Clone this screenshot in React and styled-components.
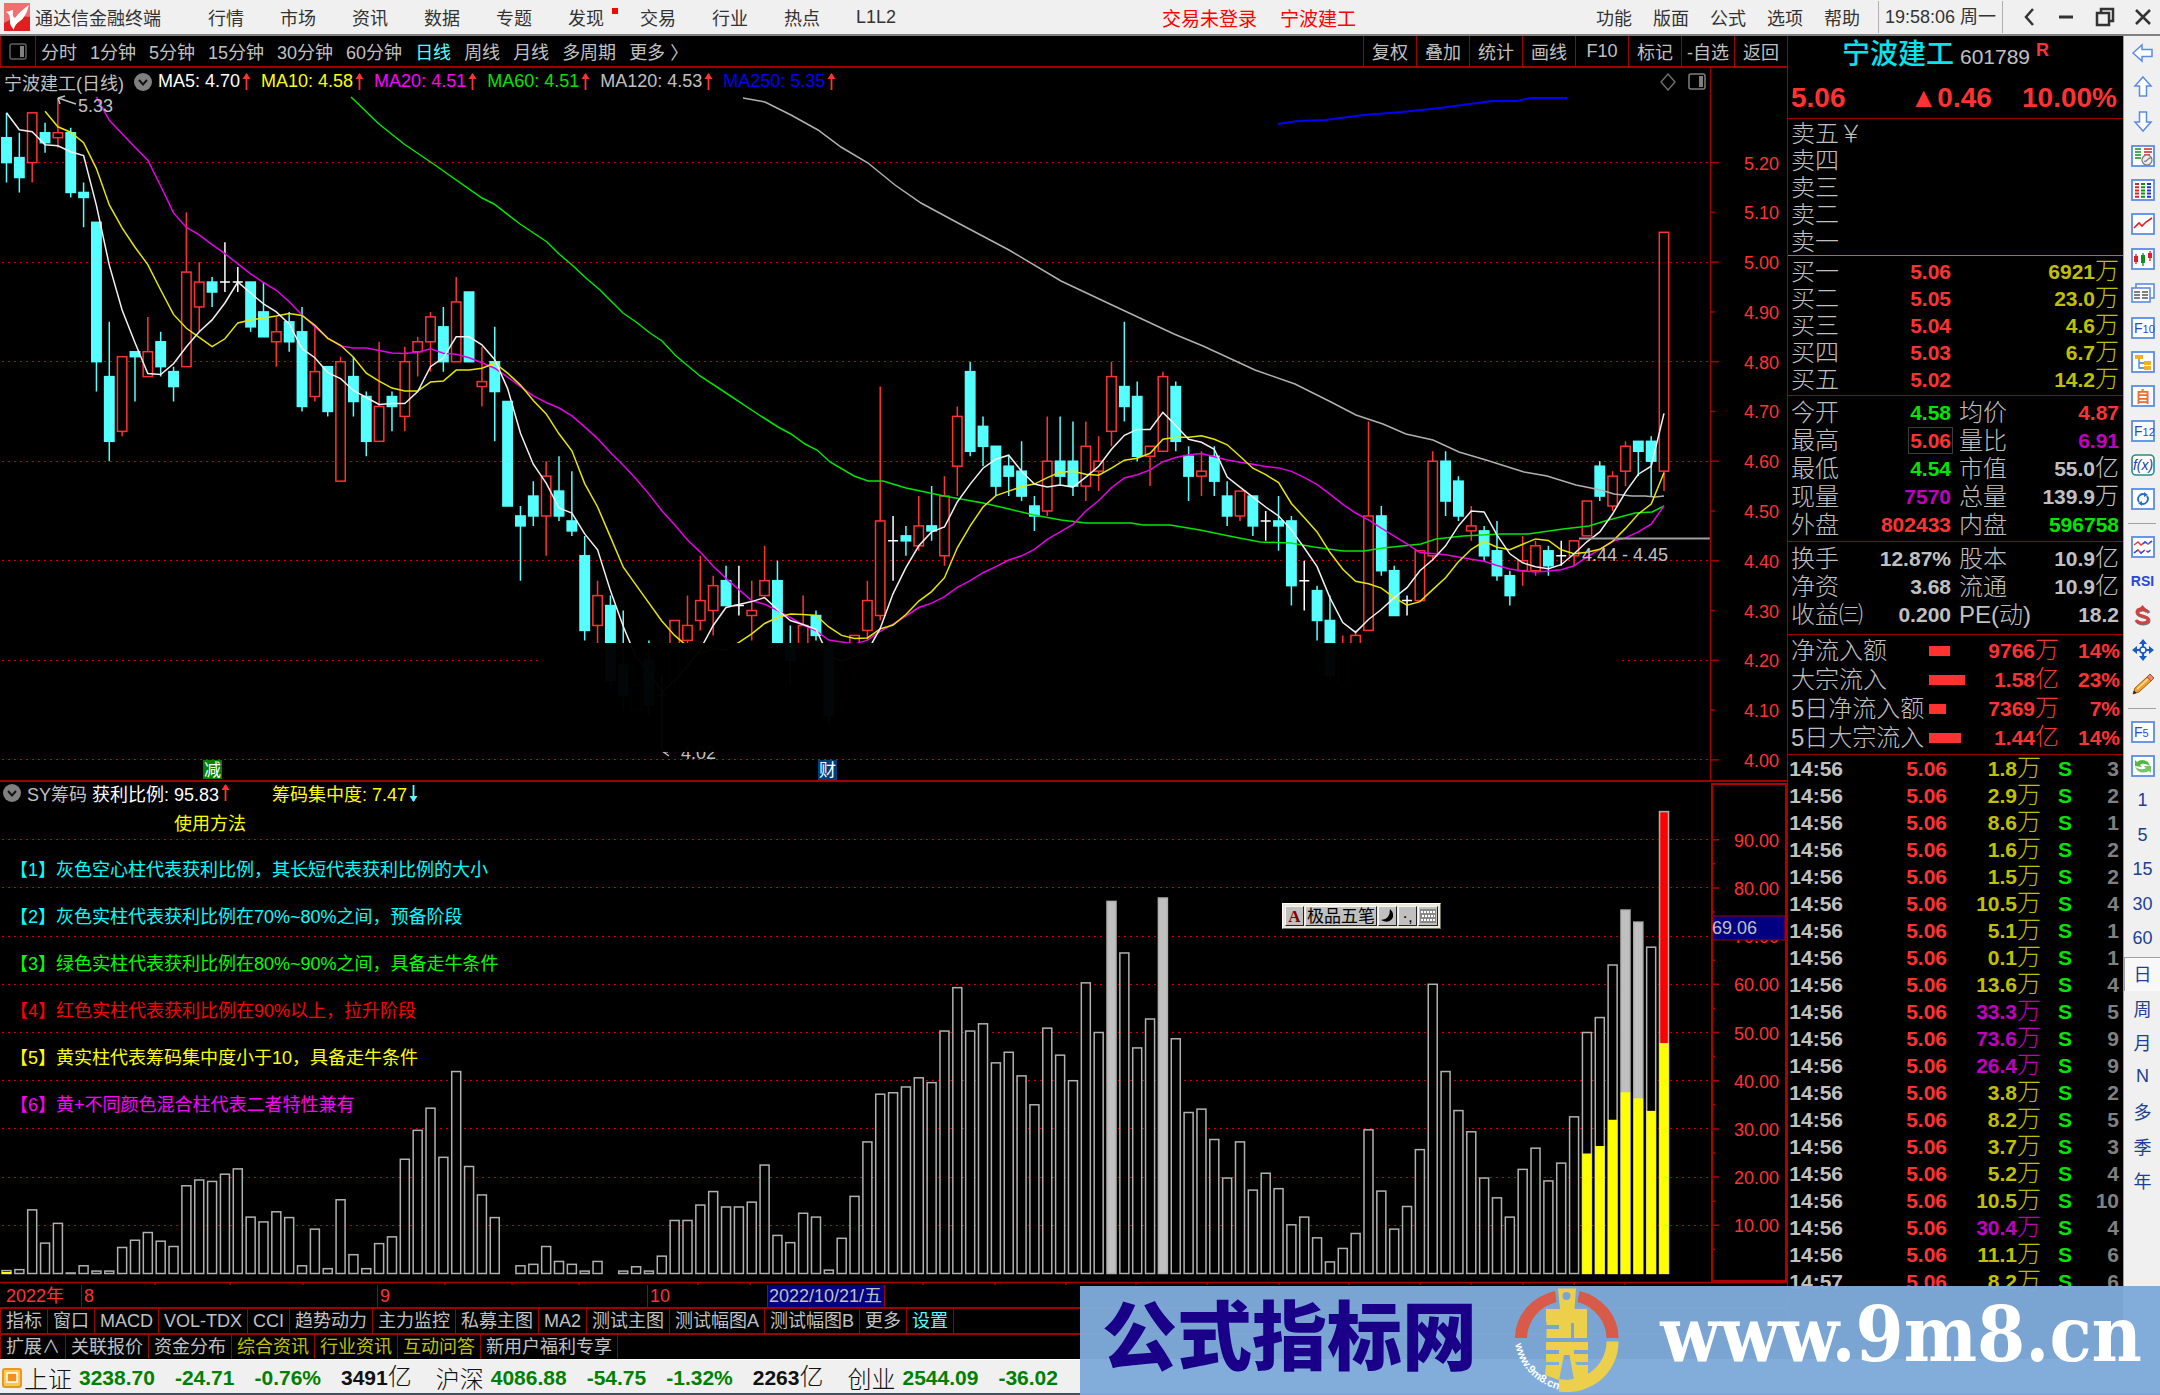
import React, { useState } from 'react';
import styled, { createGlobalStyle } from 'styled-components';

const SANS = "'Liberation Sans', 'Noto Sans CJK SC', sans-serif";

const GlobalStyle = createGlobalStyle`
    * {
        box-sizing: border-box;
    }
    body {
        margin: 0;
        background: #000;
        font-family: ${SANS};
        font-size: 18px;
        color: #c0c0c0;
    }
    button {
        margin: 0;
        padding: 0;
        border: 0;
        background: none;
        color: inherit;
        font: inherit;
        white-space: nowrap;
        cursor: pointer;
    }
    a {
        color: inherit;
        text-decoration: none;
    }
    table {
        width: 100%;
        border-collapse: collapse;
        table-layout: fixed;
    }
    th, td {
        padding: 0;
        white-space: nowrap;
    }
    svg {
        display: block;
    }
`;

/* ---------- data ---------- */

const menuLeft = ['行情', '市场', '资讯', '数据', '专题', '发现', '交易', '行业', '热点', 'L1L2'];
const menuRight = ['功能', '版面', '公式', '选项', '帮助'];
const periods = ['分时', '1分钟', '5分钟', '15分钟', '30分钟', '60分钟', '日线', '周线', '月线', '多周期'];
const tools = ['复权', '叠加', '统计', '画线', 'F10', '标记', '-自选', '返回'];

const averages = [
    ['MA5: 4.70', '#ffffff'],
    ['MA10: 4.58', '#ffff00'],
    ['MA20: 4.51', '#ff00ff'],
    ['MA60: 4.51', '#00e600'],
    ['MA120: 4.53', '#c0c0c0'],
    ['MA250: 5.35', '#0000ff'],
];

// open, high, low, close
const candles = [
    [5.25, 5.30, 5.16, 5.20], [5.21, 5.26, 5.14, 5.17], [5.20, 5.30, 5.16, 5.30], [5.26, 5.28, 5.22, 5.24],
    [5.25, 5.33, 5.23, 5.26], [5.26, 5.27, 5.13, 5.14], [5.14, 5.16, 5.07, 5.13], [5.08, 5.08, 4.74, 4.80],
    [4.77, 4.88, 4.60, 4.64], [4.66, 4.81, 4.65, 4.81], [4.82, 4.82, 4.72, 4.81], [4.77, 4.89, 4.77, 4.82],
    [4.84, 4.86, 4.77, 4.79], [4.78, 4.79, 4.72, 4.75], [4.79, 5.10, 4.79, 4.98], [4.91, 5.00, 4.86, 4.96],
    [4.96, 4.97, 4.91, 4.94], [4.96, 5.04, 4.94, 4.96], [4.96, 4.99, 4.94, 4.96], [4.96, 4.96, 4.86, 4.87],
    [4.90, 4.96, 4.85, 4.85], [4.84, 4.89, 4.79, 4.86], [4.88, 4.90, 4.82, 4.84], [4.86, 4.91, 4.70, 4.71],
    [4.73, 4.87, 4.72, 4.78], [4.79, 4.79, 4.69, 4.70], [4.56, 4.81, 4.56, 4.80], [4.77, 4.81, 4.69, 4.72],
    [4.73, 4.74, 4.61, 4.64], [4.64, 4.84, 4.64, 4.71], [4.73, 4.74, 4.66, 4.71], [4.69, 4.83, 4.66, 4.80],
    [4.82, 4.85, 4.77, 4.84], [4.84, 4.90, 4.78, 4.89], [4.87, 4.91, 4.78, 4.80], [4.80, 4.97, 4.80, 4.92],
    [4.94, 4.94, 4.80, 4.80], [4.75, 4.83, 4.71, 4.76], [4.80, 4.87, 4.64, 4.74], [4.72, 4.72, 4.51, 4.51],
    [4.49, 4.51, 4.36, 4.47], [4.53, 4.56, 4.47, 4.49], [4.49, 4.60, 4.41, 4.57], [4.54, 4.61, 4.48, 4.49],
    [4.48, 4.58, 4.45, 4.46], [4.41, 4.45, 4.24, 4.26], [4.27, 4.36, 4.23, 4.33], [4.31, 4.33, 4.15, 4.16],
    [4.19, 4.30, 4.10, 4.13], [4.10, 4.18, 4.10, 4.15], [4.20, 4.24, 4.09, 4.11], [4.13, 4.17, 4.02, 4.13],
    [4.16, 4.28, 4.14, 4.28], [4.24, 4.33, 4.18, 4.27], [4.28, 4.41, 4.26, 4.32], [4.30, 4.37, 4.25, 4.35],
    [4.36, 4.39, 4.31, 4.31], [4.31, 4.39, 4.29, 4.31], [4.29, 4.36, 4.24, 4.30], [4.33, 4.43, 4.33, 4.36],
    [4.36, 4.40, 4.22, 4.23], [4.23, 4.27, 4.15, 4.20], [4.22, 4.33, 4.20, 4.27], [4.29, 4.30, 4.24, 4.25],
    [4.23, 4.23, 4.07, 4.09], [4.12, 4.20, 4.10, 4.18], [4.18, 4.25, 4.16, 4.25], [4.26, 4.36, 4.24, 4.32],
    [4.29, 4.75, 4.28, 4.48], [4.44, 4.49, 4.36, 4.44], [4.45, 4.47, 4.41, 4.44], [4.43, 4.53, 4.42, 4.47],
    [4.47, 4.55, 4.44, 4.46], [4.41, 4.57, 4.39, 4.53], [4.59, 4.71, 4.53, 4.69], [4.78, 4.80, 4.61, 4.62],
    [4.67, 4.69, 4.59, 4.63], [4.63, 4.63, 4.53, 4.55], [4.59, 4.61, 4.53, 4.57], [4.58, 4.64, 4.52, 4.53],
    [4.51, 4.53, 4.46, 4.49], [4.50, 4.69, 4.49, 4.60], [4.60, 4.69, 4.55, 4.57], [4.60, 4.68, 4.53, 4.55],
    [4.55, 4.68, 4.52, 4.63], [4.58, 4.65, 4.54, 4.60], [4.66, 4.80, 4.63, 4.77], [4.75, 4.88, 4.68, 4.71],
    [4.73, 4.76, 4.60, 4.61], [4.61, 4.63, 4.55, 4.63], [4.62, 4.78, 4.62, 4.77], [4.75, 4.76, 4.62, 4.64],
    [4.61, 4.63, 4.52, 4.57], [4.57, 4.62, 4.53, 4.58], [4.61, 4.63, 4.53, 4.56], [4.53, 4.56, 4.47, 4.49],
    [4.49, 4.54, 4.48, 4.54], [4.53, 4.53, 4.45, 4.47], [4.48, 4.50, 4.44, 4.48], [4.48, 4.53, 4.42, 4.47],
    [4.48, 4.49, 4.31, 4.35], [4.36, 4.40, 4.30, 4.36], [4.34, 4.35, 4.24, 4.28], [4.28, 4.33, 4.16, 4.17],
    [4.15, 4.25, 4.14, 4.22], [4.21, 4.26, 4.20, 4.25], [4.26, 4.68, 4.26, 4.49], [4.49, 4.51, 4.37, 4.38],
    [4.38, 4.39, 4.29, 4.29], [4.32, 4.33, 4.29, 4.32], [4.32, 4.42, 4.32, 4.42], [4.41, 4.62, 4.40, 4.60],
    [4.60, 4.62, 4.49, 4.52], [4.56, 4.57, 4.48, 4.49], [4.46, 4.51, 4.44, 4.47], [4.46, 4.47, 4.40, 4.41],
    [4.42, 4.48, 4.36, 4.37], [4.37, 4.38, 4.31, 4.33], [4.38, 4.45, 4.35, 4.40], [4.38, 4.44, 4.37, 4.43],
    [4.42, 4.43, 4.37, 4.39], [4.41, 4.44, 4.39, 4.41], [4.41, 4.44, 4.39, 4.44], [4.45, 4.52, 4.45, 4.52],
    [4.59, 4.60, 4.52, 4.53], [4.51, 4.58, 4.50, 4.57], [4.58, 4.64, 4.55, 4.63], [4.64, 4.64, 4.57, 4.62],
    [4.64, 4.65, 4.53, 4.60], [4.58, 5.06, 4.54, 5.06],
];

// closes of the days before the first visible candle
const earlier = [5.58, 5.35, 5.35, 5.34, 5.83, 5.83, 5.57, 5.25, 5.34, 5.32, 5.37, 5.27];

const ma60 = '351,97 379,124 404,144 432,163 482,198 494,204 520,224 547,242 559,254 572,265 586,278 600,290 623,313 636,322 650,333 662,341 675,355 700,376 726,393 753,411 778,427 791,434 805,444 817,450 830,462 854,476 868,481 883,481 906,488 944,496 983,503 1009,509 1034,515 1061,520 1086,523 1131,523 1143,525 1170,525 1200,530 1234,537 1260,542 1291,543 1314,547 1343,551 1364,551 1383,548 1421,544 1436,539 1463,536 1501,534 1528,534 1563,529 1589,526 1605,521 1635,513 1652,512 1664,506';
const ma120 = '743,98 765,102 791,115 818,130 841,147 868,163 895,185 921,203 958,223 1009,250 1061,281 1112,305 1174,334 1203,346 1255,370 1295,384 1329,401 1356,415 1383,424 1406,434 1433,440 1459,452 1486,460 1524,472 1547,476 1576,485 1601,490 1614,494 1632,496 1645,496 1655,497 1664,496';
const ma250 = '1278,124 1298,121 1325,120 1364,115 1402,112 1440,108 1492,101 1517,101 1531,98 1567,98';

const profit = [
    0.6, 0.8, 13.2, 6.3, 10.4, 0.1, 1.6, 0.5, 0.5, 5.4, 6.9, 8.5, 6.7, 5.6, 18.2, 19.4, 19.1, 20.6, 21.7, 11.7,
    10.7, 12.8, 11.6, 1.6, 9.2, 1, 15.3, 3.9, 1, 6.2, 7.6, 23.7, 29.7, 34.3, 24.1, 41.9, 22.2, 16.3, 11.6, 0,
    1.6, 1.9, 5.6, 2.5, 1.9, 0.5, 2.5, 0, 0.5, 1.4, 0.5, 3.6, 11, 11, 14.2, 17, 13.8, 13.8, 14.8, 22.5,
    7.9, 6.4, 12.5, 11.7, 0.7, 7.3, 16, 27.3, 37.2, 37.5, 38.7, 40.6, 39.6, 50.3, 59.3, 50.3, 51.8, 43.7, 45.9, 41,
    35, 50.9, 45.3, 40, 60.3, 50, 77.2, 66.5, 46.8, 52.8, 77.9, 48.7, 33.4, 34.1, 27.8, 19.8, 27.3, 17.3, 20.8, 17.6,
    10.1, 11.7, 7.4, 2.4, 5.2, 8.3, 29.8, 17.1, 9.2, 13.9, 25.7, 60, 41.9, 33.8, 29.4, 19.8, 15.7, 11.7, 21.6, 26,
    19.2, 22.9, 32.5, 50, 53.1, 64, 75.4, 72.9, 67.7, 95.83,
];

const legend = [
    ['【1】灰色空心柱代表获利比例，其长短代表获利比例的大小', '#00ffff'],
    ['【2】灰色实柱代表获利比例在70%~80%之间，预备阶段', '#00ffff'],
    ['【3】绿色实柱代表获利比例在80%~90%之间，具备走牛条件', '#00ff00'],
    ['【4】红色实柱代表获利比例在90%以上，拉升阶段', '#ff0000'],
    ['【5】黄实柱代表筹码集中度小于10，具备走牛条件', '#ffff00'],
    ['【6】黄+不同颜色混合柱代表二者特性兼有', '#ff00ff'],
];

const indicatorTabs = ['指标', '窗口', 'MACD', 'VOL-TDX', 'CCI', '趋势动力', '主力监控', '私募主图', 'MA2', '测试主图', '测试幅图A', '测试幅图B', '更多', '设置'];
const infoTabs = ['扩展∧', '关联报价', '资金分布', '综合资讯', '行业资讯', '互动问答', '新用户福利专享'];

const RED = '#ff3232';
const GREEN = '#00e600';
const GOLD = '#c0c000';
const PURPLE = '#c000c0';
const GRAY = '#c0c0c0';

const asks = ['卖五￥', '卖四', '卖三', '卖二', '卖一'];
const bids = [
    ['买一', '5.06', '6921万'],
    ['买二', '5.05', '23.0万'],
    ['买三', '5.04', '4.6万'],
    ['买四', '5.03', '6.7万'],
    ['买五', '5.02', '14.2万'],
];
const stats = [
    ['今开', '4.58', GREEN, '均价', '4.87', RED],
    ['最高', '5.06', RED, '量比', '6.91', PURPLE],
    ['最低', '4.54', GREEN, '市值', '55.0亿', GRAY],
    ['现量', '7570', PURPLE, '总量', '139.9万', GRAY],
    ['外盘', '802433', RED, '内盘', '596758', GREEN],
];
const shares = [
    ['换手', '12.87%', GRAY, '股本', '10.9亿', GRAY],
    ['净资', '3.68', GRAY, '流通', '10.9亿', GRAY],
    ['收益㈢', '0.200', GRAY, 'PE(动)', '18.2', GRAY],
];
const flows = [
    ['净流入额', 21, '9766万', '14%'],
    ['大宗流入', 36, '1.58亿', '23%'],
    ['5日净流入额', 17, '7369万', '7%'],
    ['5日大宗流入', 32, '1.44亿', '14%'],
];
const ticks = [
    ['14:56', '1.8', 3], ['14:56', '2.9', 2], ['14:56', '8.6', 1], ['14:56', '1.6', 2], ['14:56', '1.5', 2],
    ['14:56', '10.5', 4], ['14:56', '5.1', 1], ['14:56', '0.1', 1], ['14:56', '13.6', 4], ['14:56', '33.3', 5],
    ['14:56', '73.6', 9], ['14:56', '26.4', 9], ['14:56', '3.8', 2], ['14:56', '8.2', 5], ['14:56', '3.7', 3],
    ['14:56', '5.2', 4], ['14:56', '10.5', 10], ['14:56', '30.4', 4], ['14:56', '11.1', 6], ['14:57', '8.2', 6],
];

const indices = [
    ['上证', '3238.70', '-24.71', '-0.76%', '3491'],
    ['沪深', '4086.88', '-54.75', '-1.32%', '2263'],
    ['创业', '2544.09', '-36.02'],
];

/* ---------- top bars ---------- */

const Page = styled.div`
    position: relative;
    display: flex;
    flex-direction: column;
    min-height: 100vh;
    overflow: hidden;
    background: #000;
`;

const TopBar = styled.header`
    display: flex;
    align-items: center;
    height: 36px;
    background: #f0f0f0;
    border-bottom: 2px solid #808080;
    color: #333;
`;

const Brand = styled.div`
    display: flex;
    align-items: center;
    gap: 5px;
    width: 208px;
    padding-left: 4px;
`;

const Menu = styled.nav`
    display: flex;
    gap: ${p => p.$gap}px;
`;

const MenuButton = styled.button`
    position: relative;
    width: 36px;
    text-align: left;
    color: #333;
`;

const Dot = styled.i`
    position: absolute;
    top: 4px;
    right: -14px;
    width: 6px;
    height: 6px;
    background: #f00;
`;

const Notice = styled.div`
    display: flex;
    gap: 23px;
    margin: 0 auto;
    padding-left: 30px;
    color: #f00;
    font-size: 19px;
`;

const Clock = styled.time`
    height: 32px;
    margin-left: 18px;
    padding: 0 6px;
    border: solid #b0b0b0;
    border-width: 0 1px;
    line-height: 32px;
`;

const WindowButtons = styled.div`
    display: flex;
    justify-content: space-between;
    width: 132px;
    margin: 0 8px 0 17px;
`;

const Body = styled.div`
    display: grid;
    grid-template-columns: minmax(0, 1fr) 336px 37px;
    flex: 1;
`;

const Main = styled.main`
    display: flex;
    flex-direction: column;
    min-width: 0;
`;

const PeriodBar = styled.div`
    display: flex;
    height: 32px;
    border-bottom: 2px solid #a00000;
    border-left: 1px solid #a00000;
`;

const LayoutButton = styled.button`
    display: grid;
    place-items: center;
    width: 35px;
    margin-right: 5px;
    border-right: 1px solid #a00000;
`;

const Periods = styled.nav`
    display: flex;
    flex: 1;
    gap: 13px;
`;

const PeriodButton = styled.button`
    color: ${p => (p.$active ? '#55ffff' : '#c0c0c0')};
`;

const ToolButton = styled.button`
    width: 53px;
    border-left: 1px solid #a00000;
`;

/* ---------- charts ---------- */

const InfoRow = styled.div`
    display: flex;
    align-items: center;
    height: 27px;
    padding-left: 4px;
`;

const InfoTitle = styled.span`
    width: 130px;
`;

const Averages = styled.div`
    display: flex;
    gap: 10px;
    margin-left: 6px;
`;

const Average = styled.span`
    display: flex;
    align-items: center;
    gap: 2px;
    color: ${p => p.$color};
`;

const InfoIcons = styled.div`
    display: flex;
    align-items: center;
    align-self: stretch;
    gap: 12px;
    margin-left: auto;
    padding-right: 4px;
`;

const AxisTop = styled.div`
    align-self: stretch;
    width: 77px;
    border-left: 1px solid #a00000;
`;

const ChartSvg = styled.svg`
    width: 100%;
    height: auto;
    font-family: ${SANS};
    font-size: 18px;
`;

const PriceChart = styled.section`
    border-bottom: 2px solid #a00000;
`;

const IndicatorPanel = styled.section`
    position: relative;
`;

const IndicatorText = styled.div`
    position: absolute;
    top: 0;
    left: 0;
`;

const IndicatorTitle = styled.div`
    display: flex;
    align-items: center;
    height: 22px;
    padding-left: 3px;
`;

const IndicatorName = styled.span`
    width: 65px;
    margin-left: 6px;
`;

const IndicatorValue = styled.span`
    display: flex;
    align-items: center;
    gap: 2px;
    width: 180px;
    color: ${p => p.$color};
`;

const LegendTitle = styled.h2`
    height: 43px;
    margin: 0;
    padding-left: 174px;
    color: #ff0;
    font-size: 18px;
    font-weight: 400;
    line-height: 40px;
`;

const LegendList = styled.ul`
    margin: 0;
    padding: 0 0 0 10px;
    list-style: none;
`;

const LegendItem = styled.li`
    height: 47px;
    color: ${p => p.$color};
    line-height: 47px;
`;

const ImeBar = styled.div`
    position: absolute;
    top: 121px;
    left: 1282px;
    display: flex;
    gap: 1px;
    padding: 2px;
    border: 1px solid;
    border-color: #fff #707060 #707060 #fff;
    background: #ece9d8;
`;

const ImeButton = styled.button`
    display: grid;
    place-items: center;
    min-width: 19px;
    height: 20px;
    padding: 0 1px;
    border: 1px solid;
    border-color: #f4f4f4 #222 #222 #f4f4f4;
    background: #c0c0c0;
    color: #000;
    font-size: 17px;
    line-height: 17px;
`;

const ImeLetter = styled.b`
    color: #800000;
    font-family: 'Liberation Serif', serif;
`;

const DateStrip = styled.div`
    display: flex;
    height: 22px;
    color: ${RED};
    line-height: 22px;
`;

const DateCell = styled.div`
    width: ${p => p.$width}px;
    padding-left: ${p => p.$pad}px;
    border-right: 1px solid #a00000;
`;

const CursorDate = styled(DateCell)`
    background: #000080;
    color: #c0c0c0;
`;

const TabRow = styled.nav`
    display: flex;
    height: 26px;
    border-top: 2px solid #a00000;
    border-left: 1px solid #a00000;
`;

const TabButton = styled.button`
    padding: 0 5px;
    border-right: 1px solid #a00000;
    color: ${p => p.$color || '#c0c0c0'};
    line-height: 24px;
`;

const UpArrow = () => (
    <svg width="9" height="18" viewBox="0 0 9 18">
        <path d="M4.500 1V17" stroke={RED} strokeWidth="1.800" />
        <path d="M4.500 0L8.500 6H0.500Z" fill={RED} />
    </svg>
);

const DownArrow = () => (
    <svg width="9" height="18" viewBox="0 0 9 18">
        <path d="M4.500 1V17" stroke="#55ffff" strokeWidth="1.800" />
        <path d="M4.500 18L8.500 12H0.500Z" fill="#55ffff" />
    </svg>
);

const Chevron = () => (
    <svg width="18" height="18" viewBox="0 0 18 18">
        <circle cx="9" cy="9" r="9" fill="#808080" />
        <path d="M5 7L9 11.500L13 7" fill="none" stroke="#111" strokeWidth="2" />
    </svg>
);

const SideIcon = ({ filled }) => (
    <svg width="18" height="17" viewBox="0 0 18 17">
        <rect x="1" y="1" width="16" height="15" rx="2" fill="none" stroke={filled ? '#808080' : '#606060'} strokeWidth="1.500" />
        <rect x="11" y="3" width="4" height="11" fill="#808080" />
    </svg>
);

const STEP = 12.849;
const xAt = i => 6.5 + i * STEP;
const priceY = p => 162.6 + (5.2 - p) * 497.7;
const percentY = v => 1273.5 - v * 4.82;

function averageLine(days) {
    const closes = earlier.concat(candles.map(c => c[3]));
    const points = [];
    candles.forEach((c, i) => {
        const end = i + earlier.length + 1;
        if (end < days) return;
        const mean = closes.slice(end - days, end).reduce((a, b) => a + b, 0) / days;
        if (mean < 5.34) points.push(`${xAt(i).toFixed(1)},${priceY(mean).toFixed(1)}`);
    });
    return points.join(' ');
}

function Candle({ index, data }) {
    const [open, high, low, close] = data;
    const x = xAt(index);
    const top = priceY(Math.max(open, close));
    const bottom = priceY(Math.min(open, close));
    if (open === close) {
        return <path d={`M${x} ${priceY(high)}V${priceY(low)}M${x - 5} ${top}H${x + 5}`} stroke="#fff" strokeWidth="1.500" />;
    }
    const up = close > open;
    const color = up ? RED : '#55ffff';
    return (
        <g stroke={color} strokeWidth="1.500">
            <path d={`M${x} ${priceY(high)}V${top}M${x} ${bottom}V${priceY(low)}`} />
            <rect x={x - 4.7} y={top} width="9.400" height={bottom - top} fill={up ? '#000' : color} />
        </g>
    );
}

const GridLine = ({ y }) => (
    <path d={`M2 ${Math.floor(y) + 0.5}H1710`} stroke="#d00000" strokeWidth="1" strokeDasharray="2 4" />
);

function Candles() {
    const major = [5.2, 5.0, 4.8, 4.6, 4.4, 4.2, 4.0];
    const minor = [5.1, 4.9, 4.7, 4.5, 4.3, 4.1];
    return (
        <ChartSvg viewBox="0 95 1787 685" role="img" aria-label="日线">
            {major.map(p => <GridLine key={p} y={priceY(p)} />)}
            {candles.map((c, i) => <Candle key={i} index={i} data={c} />)}
            <g fill="none" strokeWidth="1.500">
                <polyline points={ma250} stroke="#0000ff" strokeWidth="2" />
                <polyline points={ma120} stroke="#b0b0b0" />
                <polyline points={ma60} stroke="#00e600" />
                <polyline points={averageLine(20)} stroke="#e600e6" />
                <polyline points={averageLine(10)} stroke="#e6e600" />
                <polyline points={averageLine(5)} stroke="#f0f0f0" />
            </g>
            <path d="M76 104L58 98M58 98L60 104M58 98L65 96" fill="none" stroke="#c0c0c0" strokeWidth="1.500" />
            <text x="78" y="112" fill="#c0c0c0">5.33</text>
            <path d="M662 751L669 756M662 751L668 752" fill="none" stroke="#c0c0c0" strokeWidth="1.500" />
            <text x="681" y="759" fill="#c0c0c0">4.02</text>
            <rect x="538" y="643" width="1082" height="109" fill="#000" fillOpacity="0.975" />
            <path d="M1579 538.500H1710" stroke="#a0a0a0" strokeWidth="2" />
            <text x="1582" y="561" fill="#c0c0c0">4.44 - 4.45</text>
            <rect x="203" y="760" width="19" height="19" fill="#008000" />
            <text x="204" y="776" fill="#fff" fontSize="17">减</text>
            <rect x="818" y="760" width="19" height="20" fill="#003c78" />
            <text x="819" y="776" fill="#fff" fontSize="17">财</text>
            <path d="M1710.500 95V780" stroke="#a00000" strokeWidth="1.500" />
            {major.map(p => <path key={p} d={`M1711 ${priceY(p)}h8`} stroke="#a00000" strokeWidth="1.500" />)}
            {minor.map(p => <path key={p} d={`M1711 ${priceY(p)}h4`} stroke="#a00000" strokeWidth="1.500" />)}
            {major.concat(minor).map(p => (
                <text key={p} x="1779" y={priceY(p) + 7} fill={RED} textAnchor="end">{p.toFixed(2)}</text>
            ))}
        </ChartSvg>
    );
}

function ProfitBar({ index, value }) {
    if (value === 0) return null;
    const x = xAt(index);
    const y = percentY(value);
    const height = 1273.5 - y;
    const solid = value >= 90 ? '#ff0000' : value >= 70 ? '#c0c0c0' : '#000';
    const concentrated = index === 0 || index > 122;
    const half = Math.max(height / 2, 2);
    return (
        <g>
            <rect x={x - 4.5} y={y} width="9" height={height} fill={solid} stroke="#b0b0b0" strokeWidth="1.500" />
            {concentrated && <rect x={x - 4.7} y={1274 - half} width="9.400" height={half} fill="#ffff00" />}
        </g>
    );
}

function Bars() {
    const levels = [10, 20, 30, 40, 50, 60, 70, 80, 90];
    const dayMarks = [155, 230, 303, 445, 512, 579, 698, 750, 923, 995, 1066, 1136, 1207, 1279, 1349, 1420, 1471, 1523, 1574, 1625];
    return (
        <ChartSvg viewBox="0 782 1787 503" role="img" aria-label="SY筹码">
            {levels.map(v => <GridLine key={v} y={percentY(v)} />)}
            {profit.map((v, i) => <ProfitBar key={i} index={i} value={v} />)}
            <rect x="1712" y="784" width="74" height="497" fill="none" stroke="#b00000" strokeWidth="2" />
            {levels.map(v => (
                <g key={v}>
                    <path d={`M1712 ${percentY(v)}h7M1712 ${percentY(v - 5)}h3`} stroke="#b00000" strokeWidth="1.500" />
                    <text x="1779" y={percentY(v) + 7} fill={RED} textAnchor="end">{v.toFixed(2)}</text>
                </g>
            ))}
            <rect x="1713" y="916" width="72" height="24" fill="#000080" stroke="#a00000" />
            <text x="1712" y="934" fill="#c0c0c0">69.06</text>
            <path d="M0 1282.500H1787" stroke="#b00000" strokeWidth="1.500" />
            {dayMarks.map(x => <path key={x} d={`M${x} 1282v3`} stroke="#b00000" strokeWidth="1.500" />)}
        </ChartSvg>
    );
}

/* ---------- quote panel ---------- */

const QuotePanel = styled.aside`
    height: 100%;
    border-left: 1px solid #a00000;
    overflow: hidden;
    font-size: 21px;
`;

const Block = styled.section`
    padding: ${p => p.$pad || '0'};
    border-bottom: ${p => (p.$last ? '0' : '1px')} solid ${p => p.$line || '#a00000'};
`;

const StockTitle = styled.h1`
    display: flex;
    justify-content: center;
    align-items: flex-end;
    gap: 6px;
    height: 38px;
    margin: 0;
    padding-right: 20px;
    color: #00e5ee;
    font-size: 28px;
    font-weight: 500;
    line-height: 38px;
`;

const StockCode = styled.span`
    color: #c0c0c0;
    font-size: 21px;
    line-height: 34px;
`;

const MarginFlag = styled.sup`
    align-self: flex-start;
    color: ${RED};
    font-size: 18px;
    font-weight: 700;
    line-height: 28px;
`;

const Headline = styled.div`
    display: flex;
    justify-content: space-between;
    height: 44px;
    padding: 0 6px 0 3px;
    color: ${RED};
    font-size: 28px;
    font-weight: 700;
    line-height: 48px;
`;

const Rise = styled.span`
    padding-left: 34px;
`;

const Row = styled.tr`
    height: ${p => p.$height || 27}px;
`;

const Label = styled.th`
    width: ${p => (p.$width ? `${p.$width}px` : 'auto')};
    padding-left: 3px;
    font-size: 24px;
    font-weight: 300;
    line-height: 27px;
    text-align: left;
`;

const Value = styled.td`
    width: ${p => (p.$width ? `${p.$width}px` : 'auto')};
    padding-right: ${p => p.$gap || 0}px;
    color: ${p => p.$color};
    font-weight: 700;
    line-height: 27px;
    text-align: right;
`;

const Unit = styled.span`
    font-size: 24px;
    font-weight: 300;
    line-height: 1;
`;

const Boxed = styled.span`
    outline: 1px solid #3c3c3c;
    outline-offset: 1px;
`;

const FlowBar = styled.i`
    display: block;
    height: 10px;
    background: ${RED};
`;

const Amount = ({ text }) => {
    const unit = text.slice(-1);
    return unit === '万' || unit === '亿' ? <>{text.slice(0, -1)}<Unit>{unit}</Unit></> : text;
};

const StatTable = ({ rows }) => (
    <table>
        <tbody>
            {rows.map(([a, av, ac, b, bv, bc]) => (
                <Row key={a} $height={28}>
                    <Label $width={76}>{a}</Label>
                    <Value $width={92} $gap={5} $color={ac}>
                        {a === '最高' ? <Boxed>{av}</Boxed> : av}
                    </Value>
                    <Label $width={72}>{b}</Label>
                    <Value $gap={4} $color={bc}><Amount text={bv} /></Value>
                </Row>
            ))}
        </tbody>
    </table>
);

function Quote() {
    return (
        <QuotePanel>
            <Block>
                <StockTitle>
                    宁波建工<StockCode>601789</StockCode><MarginFlag>R</MarginFlag>
                </StockTitle>
                <Headline><span>5.06</span><Rise>▲0.46</Rise><span>10.00%</span></Headline>
            </Block>
            <Block $pad="1px 0 0" $line="#a08000">
                <table>
                    <tbody>
                        {asks.map(a => <Row key={a}><Label>{a}</Label></Row>)}
                    </tbody>
                </table>
            </Block>
            <Block $pad="2px 0">
                <table>
                    <tbody>
                        {bids.map(([name, price, volume]) => (
                            <Row key={name}>
                                <Label $width={76}>{name}</Label>
                                <Value $width={92} $gap={5} $color={RED}>{price}</Value>
                                <Value $gap={4} $color={GOLD}><Amount text={volume} /></Value>
                            </Row>
                        ))}
                    </tbody>
                </table>
            </Block>
            <Block $pad="2px 0 3px"><StatTable rows={stats} /></Block>
            <Block $pad="2px 0 6px"><StatTable rows={shares} /></Block>
            <Block $pad="1px 0 2px">
                <table>
                    <tbody>
                        {flows.map(([name, width, value, percent]) => (
                            <Row key={name} $height={29}>
                                <Label $width={141}>{name}</Label>
                                <td><FlowBar style={{ width }} /></td>
                                <Value $width={92} $color={RED}><Amount text={value} /></Value>
                                <Value $width={64} $gap={3} $color={RED}>{percent}</Value>
                            </Row>
                        ))}
                    </tbody>
                </table>
            </Block>
            <Block $last>
                <table>
                    <tbody>
                        {ticks.map(([time, volume, count], i) => (
                            <Row key={i}>
                                <Value as="th" $width={58} $gap={3} $color={GRAY}>{time}</Value>
                                <Value $width={101} $color={RED}>5.06</Value>
                                <Value $width={94} $color={Number(volume) > 20 ? PURPLE : GOLD}><Amount text={`${volume}万`} /></Value>
                                <Value $width={31} $color={GREEN}>S</Value>
                                <Value $gap={4} $color="#808080">{count}</Value>
                            </Row>
                        ))}
                    </tbody>
                </table>
            </Block>
        </QuotePanel>
    );
}

/* ---------- icon rail ---------- */

const RailBar = styled.nav`
    background: #f0f0f0;
    border-left: 1px solid #a0a0a0;
    color: #1c3f94;
`;

const RailGroup = styled.div`
    display: flex;
    flex-direction: column;
    height: ${p => p.$height}px;
`;

const RailButton = styled.button`
    display: grid;
    place-items: center;
    flex: 1;
    width: 100%;
    padding-bottom: 2px;
    border: solid ${p => (p.$active ? '#a0a0a0' : 'transparent')};
    border-width: 1px 0 0 1px;
    background: ${p => (p.$active ? '#f8f8f8' : 'none')};
    font-size: 18px;
`;

const RailLine = styled.hr`
    height: 13px;
    margin: 0 4px;
    border: 0;
    background: linear-gradient(#a0a0a0, #a0a0a0) center / 100% 1px no-repeat;
`;

const RailWord = styled.b`
    color: #2848d8;
    font-size: 14px;
`;

const Framed = ({ children, stroke = '#5a8ce6' }) => (
    <svg width="24" height="24" viewBox="0 0 24 24">
        <rect x="1" y="2" width="22" height="20" fill="#fff" stroke={stroke} strokeWidth="1.800" />
        {children}
    </svg>
);

const FrameText = ({ big, small }) => (
    <Framed>
        <text x="3" y="17" fill="#2848d8" fontSize="14" fontFamily={SANS}>{big}<tspan fontSize="11">{small}</tspan></text>
    </Framed>
);

const Arrow = ({ turn }) => (
    <svg width="24" height="24" viewBox="0 0 24 24">
        <path d="M2 12L11 4V8.500H21V15.500H11V20Z" transform={`rotate(${turn} 12 12)`} fill="#fff" stroke="#5a8ce6" strokeWidth="1.500" />
    </svg>
);

const railTop = [
    ['后退', <Arrow turn={0} />],
    ['上移', <Arrow turn={90} />],
    ['下移', <Arrow turn={-90} />],
    ['报价', (
        <Framed>
            <path d="M4 5H10M4 8H10M4 11H10M4 14H10" stroke="#109020" strokeWidth="1.500" />
            <path d="M13 5H21M13 8H21M13 11H19" stroke="#e02020" strokeWidth="1.500" />
            <circle cx="16" cy="16" r="5" fill="#eee" stroke="#777" strokeWidth="1.200" />
            <path d="M13 17C16 19 17 13 20 14" fill="none" stroke="#777" strokeWidth="1.200" />
        </Framed>
    )],
    ['列表', (
        <Framed>
            <g strokeWidth="4" strokeDasharray="2 1.200">
                <path d="M6 5V20" stroke="#e02020" />
                <path d="M12 5V20" stroke="#109020" />
                <path d="M18 5V20" stroke="#2030e0" />
            </g>
        </Framed>
    )],
    ['分时图', <Framed><path d="M3 16L8 11L11 14L15 10L21 6" fill="none" stroke="#e02020" strokeWidth="1.600" /></Framed>],
    ['K线图', (
        <Framed>
            <path d="M5 7V17M19 4V14" stroke="#e02020" strokeWidth="1.300" />
            <path d="M12 6V19" stroke="#109020" strokeWidth="1.300" />
            <rect x="3" y="9" width="4" height="6" fill="#e02020" />
            <rect x="10" y="8" width="4" height="8" fill="#109020" />
            <rect x="17" y="6" width="4" height="5" fill="#e02020" />
        </Framed>
    )],
    ['多窗口', (
        <svg width="24" height="24" viewBox="0 0 24 24">
            <rect x="5" y="3" width="18" height="14" fill="#fff" stroke="#5a8ce6" strokeWidth="1.600" />
            <rect x="1" y="7" width="18" height="14" fill="#fff" stroke="#5a8ce6" strokeWidth="1.600" />
            <path d="M3 11H9M11 11H17M3 14H9M11 14H17M3 17H9M11 17H17" stroke="#555" strokeWidth="1.300" />
        </svg>
    )],
    ['F10', <FrameText big="F" small="10" />],
    ['板块树', (
        <Framed>
            <path d="M8 8V18H14M8 13H14" fill="none" stroke="#4080d0" strokeWidth="1.300" />
            <rect x="4" y="5" width="8" height="4" fill="#f5b020" />
            <rect x="13" y="11" width="7" height="4" fill="#f5b020" />
            <rect x="13" y="16" width="7" height="4" fill="#f5b020" />
        </Framed>
    )],
    ['自选', <Framed><text x="12" y="18" fill="#f07030" fontSize="15" fontWeight="700" textAnchor="middle">自</text></Framed>],
    ['F12', <FrameText big="F" small="12" />],
    ['公式', (
        <svg width="24" height="24" viewBox="0 0 24 24">
            <rect x="1" y="2" width="22" height="20" rx="4" fill="#fff" stroke="#2a8a8a" strokeWidth="1.600" />
            <text x="12" y="17" fill="#2040b0" fontSize="14" fontStyle="italic" textAnchor="middle" fontFamily={SANS}>f(x)</text>
        </svg>
    )],
    ['周期', (
        <Framed>
            <path d="M8 15A5 5 0 0 1 14 7.500M16 9A5 5 0 0 1 10 16.500" fill="none" stroke="#2070d0" strokeWidth="1.800" />
            <path d="M13 5L17 8L13 10ZM11 19L7 16L11 14Z" fill="#2070d0" />
        </Framed>
    )],
];

const railMiddle = [
    ['指标线', (
        <Framed>
            <path d="M3 10L7 7L10 10L14 7L17 9L21 6M3 18L7 15L10 18L14 15" fill="none" stroke="#e04040" strokeWidth="1.500" />
            <path d="M12 9L14 7L17 9L21 6M3 18L7 15L10 18L14 15L17 17L21 14" fill="none" stroke="#3050e0" strokeWidth="1.500" strokeDasharray="5 3" />
        </Framed>
    )],
    ['RSI', <RailWord>RSI</RailWord>],
    ['资金', (
        <svg width="24" height="24" viewBox="0 0 24 24">
            <path d="M18 9C16 5 7 5 7 9.500C7 14 18 12 18 16.500C18 21 8 21 6 17" fill="none" stroke="#777" strokeWidth="3" />
            <path d="M16 8C14 4 6 4 6 8.500C6 13 17 11 17 15.500C17 20 7 20 5 16" fill="none" stroke="#d04040" strokeWidth="3" />
            <path d="M11.500 1L15 5H8Z" fill="#d04040" />
        </svg>
    )],
    ['移动', (
        <svg width="24" height="24" viewBox="0 0 24 24">
            <path d="M12 1L16 6H8ZM12 23L8 18H16ZM1 12L6 8V16ZM23 12L18 16V8Z" fill="#1858c8" />
            <path d="M12 5V19M5 12H19" stroke="#1858c8" strokeWidth="2.200" />
            <circle cx="12" cy="12" r="3" fill="#fff" stroke="#1858c8" strokeWidth="1.500" />
        </svg>
    )],
    ['画笔', (
        <svg width="24" height="24" viewBox="0 0 24 24">
            <path d="M2 22L4 16L16 5L20 9L8 20Z" fill="#f0a030" stroke="#a06010" />
            <path d="M16 5L19 2L23 6L20 9Z" fill="#f08080" stroke="#a06010" />
            <path d="M2 22L3 18.500L5.500 21Z" fill="#222" />
            <path d="M6 17L17 7" stroke="#ffe090" strokeWidth="1.500" />
        </svg>
    )],
];

const railBottom = [
    ['F5', <FrameText big="F" small="5" />],
    ['刷新', (
        <Framed>
            <path d="M4 12V6L6 8Q11 4 17 8L19 12Q12 8 9 11L11 13Z" fill="#50b840" />
            <path d="M20 12V19L18 17Q12 20 7 17L4 13Q11 17 15 14L13 12Z" fill="#70c860" />
        </Framed>
    )],
    ...['1', '5', '15', '30', '60', '日', '周', '月', 'N', '多', '季', '年'].map(t => [t, t]),
];

const RailItems = ({ items, height, active }) => (
    <RailGroup $height={height}>
        {items.map(([name, icon]) => (
            <RailButton key={name} aria-label={name} $active={name === active}>{icon}</RailButton>
        ))}
    </RailGroup>
);

/* ---------- bottom ---------- */

const StatusBar = styled.footer`
    display: flex;
    align-items: center;
    gap: 24px;
    height: 36px;
    padding: 2px 0 0 2px;
    border-top: 1px solid #fff;
    border-bottom: 2px solid #405060;
    background: #f0f0f0;
    color: #111;
    font-size: 21px;
    white-space: nowrap;
`;

const IndexQuote = styled.div`
    display: flex;
    align-items: center;
    gap: 20px;
`;

const IndexName = styled.span`
    margin-right: -13px;
    font-size: 24px;
    font-weight: 300;
`;

const Change = styled.b`
    color: #008000;
`;

const StatusIcon = styled.span`
    margin-right: -22px;
`;

const Banner = styled.a`
    position: absolute;
    right: 0;
    bottom: 0;
    left: 50%;
    display: flex;
    align-items: center;
    height: 109px;
    padding: 0 18px 0 22px;
    background: rgba(126, 170, 218, 0.97);
    white-space: nowrap;
`;

const BannerName = styled.strong`
    margin-right: 28px;
    padding-bottom: 18px;
    color: #1a0088;
    font-family: 'Noto Sans CJK SC', sans-serif;
    font-size: 75px;
    font-weight: 900;
    line-height: 90px;
`;

const BannerUrl = styled.strong`
    margin-left: auto;
    padding-bottom: 14px;
    color: #fff;
    font-family: 'DejaVu Serif Condensed', 'DejaVu Serif', serif;
    font-size: 77px;
    line-height: 90px;
`;

const CoinLogo = () => (
    <svg width="130" height="109" viewBox="0 3 130 109">
        <path d="M10 55A51.500 48 0 0 1 50 8L51.500 19A40 38 0 0 0 22 55Z" fill="#d85a48" />
        <path d="M74.500 8A51.500 48 0 0 1 113.500 55H101.500A40 38 0 0 0 72.500 19Z" fill="#d85a48" />
        <path d="M113.500 58.500A51.500 50 0 0 1 54 108.500V96A40 38 0 0 0 101.500 58.500Z" fill="#ecd04c" />
        <path fillRule="evenodd" d="M53 5.500H71L69.500 26H82V55H69V40H66V55H41.500V46H54V42H41.500V39H41V26H55ZM61.500 9A4 4 0 1 0 61.500 17A4 4 0 1 0 61.500 9Z" fill="#ecd04c" />
        <path d="M41 59H83V67H69V71H83V79H70L72 82H83V92L69 97L64.500 72H59L54 97L40 92L41 82H54V79H41V71H54V67H41Z" fill="#ecd04c" />
        <path id="coin-rim" d="M10 61Q17 94 51 106" fill="none" />
        <text fill="#fff" fontSize="11" fontWeight="700" fontFamily={SANS}>
            <textPath href="#coin-rim">www.9m8.cn</textPath>
        </text>
    </svg>
);

export default function App() {
    const [period, setPeriod] = useState('日线');

    return (
        <Page>
            <GlobalStyle />
            <TopBar>
                <Brand>
                    <svg width="26" height="28" viewBox="0 0 26 28">
                        <rect width="26" height="28" fill="#e02020" />
                        <path d="M0 0H26V14Q14 12 0 20Z" fill="#f07070" />
                        <path d="M2 9L9 7Q8 14 11 15Q15 9 25 2Q22 14 16 18Q10 22 10 27Q5 22 6 16Q6 11 2 9Z" fill="#fff" />
                    </svg>
                    <span>通达信金融终端</span>
                </Brand>
                <Menu $gap={36}>
                    {menuLeft.map(m => <MenuButton key={m}>{m}{m === '发现' && <Dot />}</MenuButton>)}
                </Menu>
                <Notice><span>交易未登录</span><span>宁波建工</span></Notice>
                <Menu $gap={21}>
                    {menuRight.map(m => <MenuButton key={m}>{m}</MenuButton>)}
                </Menu>
                <Clock>19:58:06 周一</Clock>
                <WindowButtons>
                    <button aria-label="后退">
                        <svg width="18" height="20" viewBox="0 0 18 20"><path d="M13 2L6 10L13 18" fill="none" stroke="#333" strokeWidth="2.500" /></svg>
                    </button>
                    <button aria-label="最小化">
                        <svg width="18" height="20" viewBox="0 0 18 20"><path d="M2 10H16" stroke="#333" strokeWidth="3" /></svg>
                    </button>
                    <button aria-label="还原">
                        <svg width="20" height="20" viewBox="0 0 20 20"><path d="M6 6V2H18V14H14M2 6H14V18H2Z" fill="none" stroke="#333" strokeWidth="2.500" /></svg>
                    </button>
                    <button aria-label="关闭">
                        <svg width="18" height="20" viewBox="0 0 18 20"><path d="M2 3L16 17M16 3L2 17" stroke="#333" strokeWidth="2.500" /></svg>
                    </button>
                </WindowButtons>
            </TopBar>
            <Body>
                <Main>
                    <PeriodBar>
                        <LayoutButton aria-label="布局"><SideIcon /></LayoutButton>
                        <Periods>
                            {periods.map(p => (
                                <PeriodButton key={p} $active={p === period} onClick={() => setPeriod(p)}>{p}</PeriodButton>
                            ))}
                            <PeriodButton>更多 〉</PeriodButton>
                        </Periods>
                        {tools.map(t => <ToolButton key={t}>{t}</ToolButton>)}
                    </PeriodBar>
                    <PriceChart>
                        <InfoRow>
                            <InfoTitle>宁波建工(日线)</InfoTitle>
                            <Chevron />
                            <Averages>
                                {averages.map(([text, color]) => (
                                    <Average key={text} $color={color}>{text}<UpArrow /></Average>
                                ))}
                            </Averages>
                            <InfoIcons>
                                <svg width="16" height="18" viewBox="0 0 16 18"><path d="M8 1L15 9L8 17L1 9Z" fill="none" stroke="#707070" strokeWidth="1.400" /></svg>
                                <SideIcon filled />
                            </InfoIcons>
                            <AxisTop />
                        </InfoRow>
                        <Candles />
                    </PriceChart>
                    <IndicatorPanel>
                        <Bars />
                        <IndicatorText>
                            <IndicatorTitle>
                                <Chevron />
                                <IndicatorName>SY筹码</IndicatorName>
                                <IndicatorValue $color="#fff">获利比例: 95.83<UpArrow /></IndicatorValue>
                                <IndicatorValue $color="#ff0">筹码集中度: 7.47<DownArrow /></IndicatorValue>
                            </IndicatorTitle>
                            <LegendTitle>使用方法</LegendTitle>
                            <LegendList>
                                {legend.map(([text, color]) => <LegendItem key={text} $color={color}>{text}</LegendItem>)}
                            </LegendList>
                        </IndicatorText>
                        <ImeBar>
                            <ImeButton><ImeLetter>A</ImeLetter></ImeButton>
                            <ImeButton>极品五笔</ImeButton>
                            <ImeButton aria-label="半角">
                                <svg width="15" height="16" viewBox="0 0 15 16"><path d="M10 1Q15 6 12 11Q8 16 1 12Q10 12 10 1Z" fill="#000" /></svg>
                            </ImeButton>
                            <ImeButton>·,</ImeButton>
                            <ImeButton aria-label="键盘">
                                <svg width="16" height="14" viewBox="0 0 16 14">
                                    <rect width="16" height="14" fill="#888" />
                                    <path d="M1 3H15M2 7H15M1 11H15" stroke="#fff" strokeWidth="2" strokeDasharray="2 1" />
                                </svg>
                            </ImeButton>
                        </ImeBar>
                    </IndicatorPanel>
                    <DateStrip>
                        <DateCell $width={82} $pad={6}>2022年</DateCell>
                        <DateCell $width={296} $pad={2}>8</DateCell>
                        <DateCell $width={270} $pad={2}>9</DateCell>
                        <DateCell $width={120} $pad={2}>10</DateCell>
                        <CursorDate $width={117} $pad={1}>2022/10/21/五</CursorDate>
                    </DateStrip>
                    <TabRow>
                        {indicatorTabs.map(t => <TabButton key={t} $color={t === '设置' && '#55ffff'}>{t}</TabButton>)}
                    </TabRow>
                    <TabRow>
                        {infoTabs.map((t, i) => <TabButton key={t} $color={i > 2 && i < 6 && GOLD}>{t}</TabButton>)}
                    </TabRow>
                </Main>
                <Quote />
                <RailBar>
                    <RailItems items={railTop} height={481} />
                    <RailLine />
                    <RailItems items={railMiddle} height={172} />
                    <RailLine />
                    <RailItems items={railBottom} height={483} active="日" />
                </RailBar>
            </Body>
            <StatusBar>
                <StatusIcon>
                    <svg width="20" height="20" viewBox="0 0 20 20">
                        <rect x="1" y="1" width="18" height="18" rx="2" fill="#ffc850" stroke="#e89820" strokeWidth="2" />
                        <rect x="5" y="5" width="10" height="9" fill="#f09020" stroke="#fff" strokeWidth="1.500" />
                    </svg>
                </StatusIcon>
                {indices.map(([name, value, change, percent, amount]) => (
                    <IndexQuote key={name}>
                        <IndexName>{name}</IndexName>
                        <Change>{value}</Change>
                        <Change>{change}</Change>
                        {percent && <Change>{percent}</Change>}
                        {amount && <b>{amount}<Unit>亿</Unit></b>}
                    </IndexQuote>
                ))}
            </StatusBar>
            <Banner href="#">
                <BannerName>公式指标网</BannerName>
                <CoinLogo />
                <BannerUrl>www.9m8.cn</BannerUrl>
            </Banner>
        </Page>
    );
}
